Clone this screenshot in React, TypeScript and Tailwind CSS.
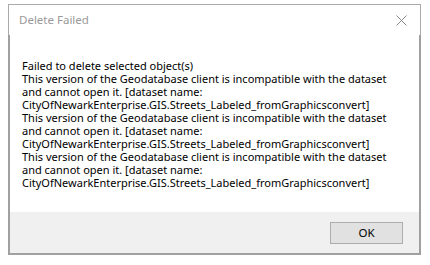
import React from "react";

const lines = [
  "Failed to delete selected object(s)",
  "This version of the Geodatabase client is incompatible with the dataset",
  "and cannot open it. [dataset name:",
  "CityOfNewarkEnterprise.GIS.Streets_Labeled_fromGraphicsconvert]",
  "This version of the Geodatabase client is incompatible with the dataset",
  "and cannot open it. [dataset name:",
  "CityOfNewarkEnterprise.GIS.Streets_Labeled_fromGraphicsconvert]",
  "This version of the Geodatabase client is incompatible with the dataset",
  "and cannot open it. [dataset name:",
  "CityOfNewarkEnterprise.GIS.Streets_Labeled_fromGraphicsconvert]",
];

export default function App() {
  return (
    <div
      className="w-[430px] h-[265px] bg-white pt-[4px] pl-[8px]"
      style={{ fontFamily: '"Noto Sans", "Open Sans", sans-serif' }}
    >
      <div className="w-[413px] flex flex-col">
        <div className="h-[31px] border-t border-x border-[#aaaaaa] flex items-center justify-between pl-[10px] pr-[12px]">
          <span className="text-[11.5px] text-[#9a9a9a]">Delete Failed</span>
          <svg width="11" height="11" viewBox="0 0 11 11" className="mr-[1px]">
            <path d="M0.5 0.5 L10.5 10.5 M10.5 0.5 L0.5 10.5" stroke="#8a8a8a" strokeWidth="1" fill="none" />
          </svg>
        </div>
        <div className="border-x-2 border-b-2 border-[#a0a0a0] flex flex-col">
          <div className="h-[177px] bg-white pt-[24px] pl-[12px] text-[11px] leading-[13px] text-black">
            {lines.map((l, i) => (
              <div key={i} className="whitespace-nowrap">{l}</div>
            ))}
          </div>
          <div className="h-[41px] bg-[#f0f0f0] flex items-start justify-end pt-[10px] pr-[16px]">
            <div className="w-[73px] h-[22px] bg-[#e1e1e1] border border-[#adadad] flex items-center justify-center text-[11.5px] text-black">
              OK
            </div>
          </div>
        </div>
      </div>
    </div>
  );
}
